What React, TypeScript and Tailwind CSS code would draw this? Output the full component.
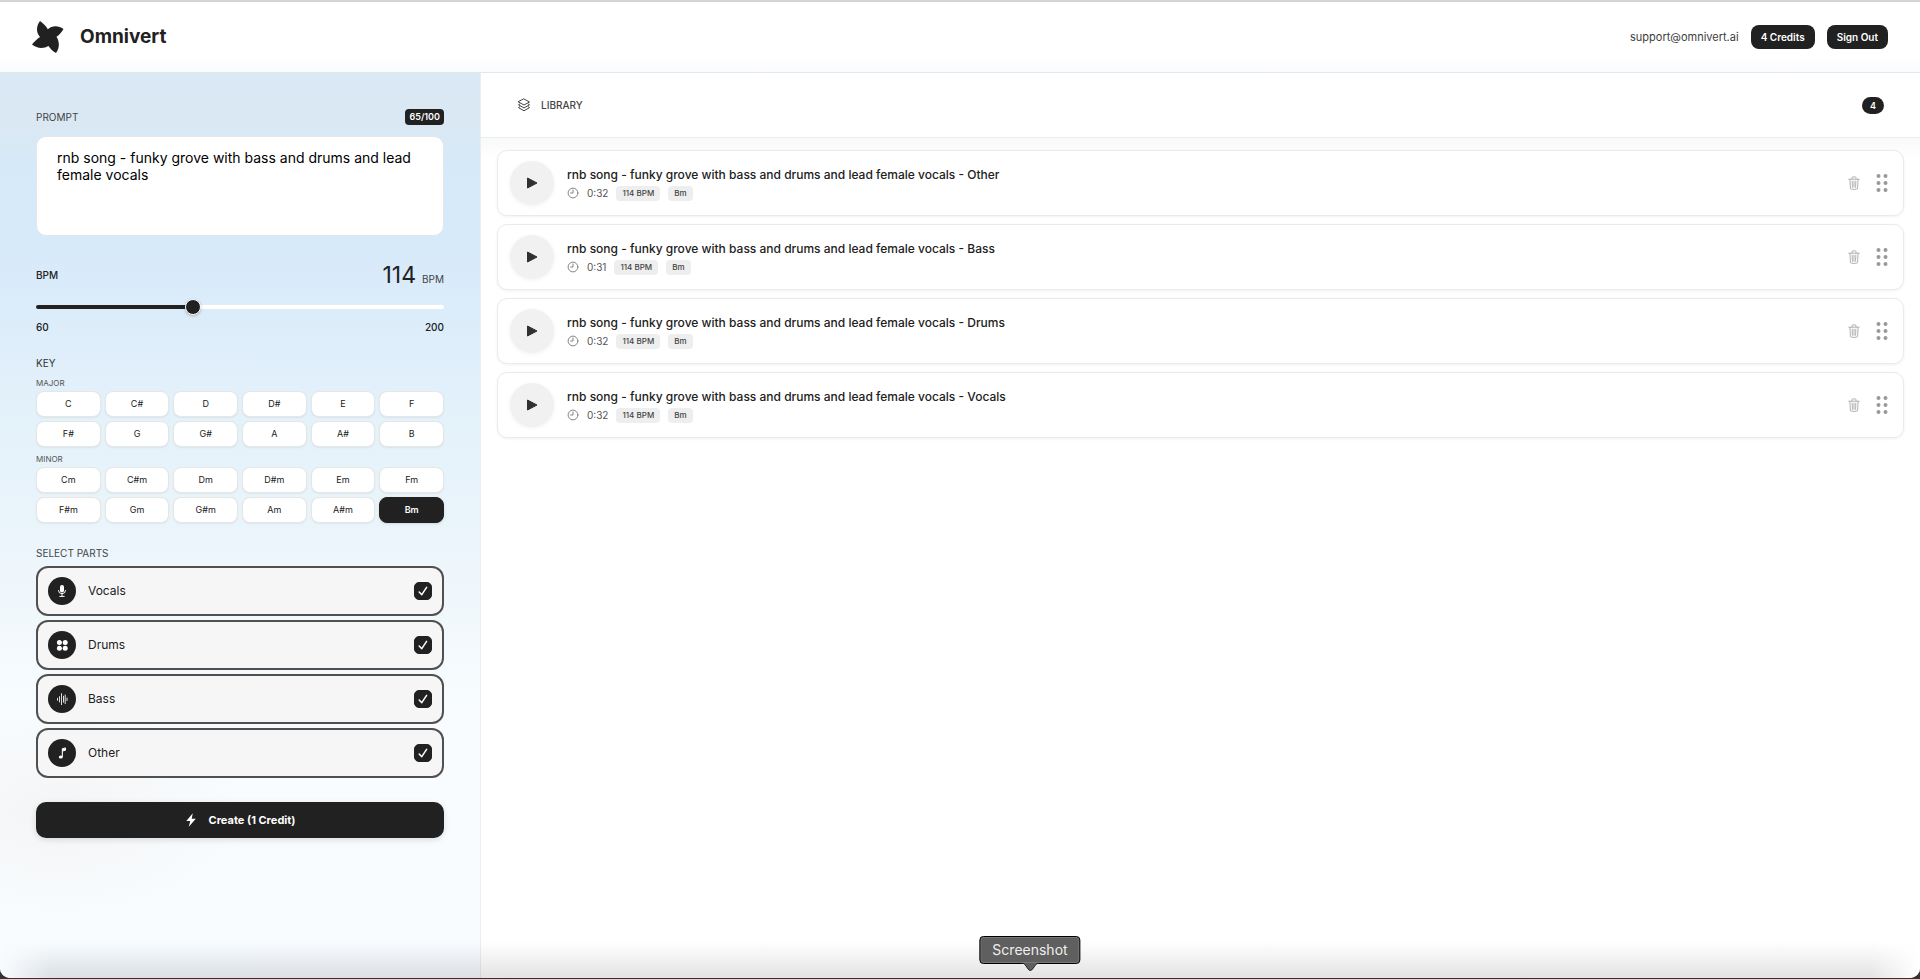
import { useState } from "react";
import type { ReactNode } from "react";

const majorKeys = ["C", "C#", "D", "D#", "E", "F", "F#", "G", "G#", "A", "A#", "B"];
const minorKeys = majorKeys.map((k) => k + "m");

const promptText = "rnb song - funky grove with bass and drums and lead female vocals";

const tracks = [
  { part: "Other", time: "0:32" },
  { part: "Bass", time: "0:31" },
  { part: "Drums", time: "0:32" },
  { part: "Vocals", time: "0:32" },
];

function Logo() {
  return (
    <svg viewBox="0 0 32 32" className="size-8 fill-[#212121]" aria-hidden="true">
      <path d="M8 0 C11 2 14 5 15.800 8.200 C20 4.500 26 4 31.500 8 C29 12 27 14 24.500 15.800 C27.500 20.500 28 27 24 32 C20.500 30 18 27.500 16.500 25 C12 27.500 5.500 28 0 23.500 C2.500 20.500 5 18 8 16 C4 12 4 5 8 0 Z" />
    </svg>
  );
}

function MicIcon() {
  return (
    <svg viewBox="0 0 14 14" className="size-3.5" aria-hidden="true">
      <rect x="5" y="1" width="4" height="7.500" rx="2" fill="white" />
      <path d="M3.500 6.500 a3.500 3.200 0 0 0 7 0 M7 10 V12.200 M4.800 12.400 H9.200" fill="none" stroke="white" strokeWidth="1" strokeLinecap="round" />
    </svg>
  );
}

function DrumsIcon() {
  return (
    <svg viewBox="0 0 14 14" className="size-3.5 fill-white" aria-hidden="true">
      <circle cx="4.400" cy="4.500" r="2.500" />
      <circle cx="10.200" cy="4.500" r="2.500" />
      <circle cx="4.400" cy="10.300" r="2.500" />
      <circle cx="10.200" cy="10.300" r="2.500" />
    </svg>
  );
}

function WaveIcon() {
  return (
    <svg viewBox="0 0 14 14" className="size-3.5" aria-hidden="true">
      <path d="M2.500 6.300 V8.300 M4.500 4.600 V10 M6.500 1.600 V12.600 M8.500 4.200 V10.200 M10.200 3 V11.600 M12 6 V8.600" fill="none" stroke="#dedede" strokeWidth="1" strokeLinecap="round" />
    </svg>
  );
}

function NoteIcon() {
  return (
    <svg viewBox="0 0 14 14" className="size-3.5" aria-hidden="true">
      <path d="M7.300 11 V2.700 L10.500 1.900 V4.200 L7.900 4.900" fill="white" stroke="white" strokeWidth="1" strokeLinejoin="round" />
      <ellipse cx="5.800" cy="11" rx="2" ry="1.600" fill="white" />
    </svg>
  );
}

function BoltIcon() {
  return (
    <svg viewBox="0 0 12 16" className="h-4 w-3 fill-white" aria-hidden="true">
      <path d="M7.800 1.300 L1.300 8.900 H5.200 L3.800 14.700 L10.800 6.700 H6.700 Z" />
    </svg>
  );
}

function LayersIcon() {
  return (
    <svg viewBox="0 0 14 14" className="size-3.5" fill="none" stroke="#444" strokeWidth="1" strokeLinejoin="round" strokeLinecap="round" aria-hidden="true">
      <path d="M7 1 L12.500 4 L7 7 L1.500 4 Z" />
      <path d="M2.800 6 L1.500 6.800 L7 9.900 L12.500 6.800 L11.200 6" />
      <path d="M2.800 8.800 L1.500 9.600 L7 12.800 L12.500 9.600 L11.200 8.800" />
    </svg>
  );
}

function ClockIcon() {
  return (
    <svg viewBox="0 0 12 12" className="size-3" fill="none" stroke="#777" strokeWidth="0.9" strokeLinecap="round" aria-hidden="true">
      <circle cx="6" cy="6" r="4.900" />
      <path d="M6 3 V6 H3.600" />
    </svg>
  );
}

function TrashIcon() {
  return (
    <svg viewBox="0 0 12 14" className="h-3.5 w-3" fill="none" stroke="#a8a8a8" strokeWidth="0.9" strokeLinecap="round" strokeLinejoin="round" aria-hidden="true">
      <path d="M0.800 3.200 H11.200 M4 3 V1.800 Q4 0.900 4.900 0.900 H7.100 Q8 0.900 8 1.800 V3 M1.900 3.400 L2.400 12 Q2.500 13.300 3.700 13.300 H8.300 Q9.500 13.300 9.600 12 L10.100 3.400 M4.200 5.200 L4.400 11.300 M6 5.200 V11.300 M7.800 5.200 L7.600 11.300" />
    </svg>
  );
}

function GripIcon() {
  return (
    <svg viewBox="0 0 12 18" className="h-[18px] w-3 fill-[#999]" aria-hidden="true">
      {[2, 9, 16].map((y) => (
        <g key={y}>
          <circle cx="2.500" cy={y} r="2" />
          <circle cx="9.500" cy={y} r="2" />
        </g>
      ))}
    </svg>
  );
}

function KeyGrid({ keys, selected, onSelect }: { keys: string[]; selected: string; onSelect: (k: string) => void }) {
  return (
    <div className="grid grid-cols-6 gap-1">
      {keys.map((k) => (
        <button
          key={k}
          type="button"
          aria-pressed={k === selected}
          onClick={() => onSelect(k)}
          className={
            k === selected
              ? "h-[26px] rounded-lg border border-[#212121] bg-[#212121] text-[9px] font-semibold text-white shadow-sm"
              : "h-[26px] rounded-lg border border-[#e6e6e6] bg-white text-[9px] text-[#212121] shadow-[0_1px_2px_rgba(0,0,0,0.06)]"
          }
        >
          {k}
        </button>
      ))}
    </div>
  );
}

function PartRow({ name, icon }: { name: string; icon: ReactNode }) {
  return (
    <label className="flex h-[50px] items-center rounded-xl border-2 border-[#505050] bg-[#f6f6f6] px-2.5">
      <span className="grid size-7 place-items-center rounded-full bg-[#212121]">{icon}</span>
      <span className="ml-3 flex-1 text-xs text-[#212121]">{name}</span>
      <span className="grid size-[18px] place-items-center">
        <input type="checkbox" defaultChecked className="peer col-start-1 row-start-1 size-[18px] appearance-none rounded-[5px] border border-[#212121] bg-white checked:bg-[#212121]" />
        <svg viewBox="0 0 12 12" className="pointer-events-none col-start-1 row-start-1 size-3 opacity-0 peer-checked:opacity-100" aria-hidden="true">
          <path d="M2.200 7 L4.800 9.700 L9.600 2.300" fill="none" stroke="white" strokeWidth="1.500" strokeLinecap="round" strokeLinejoin="round" />
        </svg>
      </span>
    </label>
  );
}

export default function App() {
  const [bpm, setBpm] = useState(114);
  const [musicKey, setMusicKey] = useState("Bm");
  const [prompt, setPrompt] = useState(promptText);

  return (
    <div className="flex min-h-screen flex-col bg-[#333] pb-px font-['Inter',sans-serif] text-[#212121]">
      <div className="relative flex flex-1 flex-col overflow-hidden rounded-b-[10px] bg-white">
        <header className="flex h-[73px] items-center border-t-2 border-b border-t-[#d4d4d4] border-b-[#e4e6e8] bg-linear-to-b from-white from-80% to-[#fafbfd] px-8">
          <Logo />
          <h1 className="ml-4 text-[19px] font-bold">Omnivert</h1>
          <div className="ml-auto flex items-center gap-3">
            <span className="text-[11px] text-[#3d3d3d]">support@omnivert.ai</span>
            <button type="button" className="h-6 rounded-lg bg-[#212121] px-2.5 text-[10px] font-semibold text-white">4 Credits</button>
            <button type="button" className="h-6 rounded-lg bg-[#212121] px-2.5 text-[10px] font-semibold text-white">Sign Out</button>
          </div>
        </header>

        <div className="flex flex-1">
          <aside className="w-1/4 min-w-80 bg-[radial-gradient(ellipse_190px_110px_at_60px_740px,rgba(244,244,244,0.9),rgba(246,246,246,0)),linear-gradient(to_bottom,#d9e8f4_0,#dae8f3_50px,#d5e9f9_100px,#d7eafa_170px,#ddedfa_260px,#e4f2fa_350px,#eaf4fb_450px,#f1f8fc_540px,#f8fcff_640px,#f8fcff_100%)] px-9 pt-9">
            <div className="flex h-4 items-center justify-between">
              <label htmlFor="prompt" className="text-[10px] leading-4 text-[#444]">PROMPT</label>
              <span className="rounded-sm bg-[#212121] px-1 text-[9px] leading-4 font-semibold text-white">{prompt.length}/100</span>
            </div>
            <textarea
              id="prompt"
              value={prompt}
              maxLength={100}
              onChange={(e) => setPrompt(e.target.value)}
              className="mt-[11px] block h-[100px] w-full resize-none rounded-[10px] border border-[#e6e6e6] bg-white px-5 py-3 text-sm leading-[17px] text-black outline-none"
            />

            <div className="mt-6 flex h-[30px] items-center justify-between">
              <label htmlFor="bpm" className="text-[10px] font-medium">BPM</label>
              <div className="flex items-baseline gap-1.5">
                <span className="text-[23px]">{bpm}</span>
                <span className="text-[10px] text-[#444]">BPM</span>
              </div>
            </div>
            <div className="mt-[9px] grid h-4 items-center">
              <div className="col-start-1 row-start-1 h-1 overflow-hidden rounded-full bg-white">
                <div className="h-full bg-[#212121]" style={{ width: ((bpm - 60) / 140) * 100 + "%" }} />
              </div>
              <input
                id="bpm"
                type="range"
                min={60}
                max={200}
                value={bpm}
                onChange={(e) => setBpm(Number(e.target.value))}
                className="col-start-1 row-start-1 -mx-2 h-4 appearance-none bg-transparent [&::-webkit-slider-thumb]:size-4 [&::-webkit-slider-thumb]:appearance-none [&::-webkit-slider-thumb]:rounded-full [&::-webkit-slider-thumb]:border [&::-webkit-slider-thumb]:border-white [&::-webkit-slider-thumb]:bg-[#212121] [&::-webkit-slider-thumb]:shadow-[0_1px_3px_rgba(0,0,0,0.25)]"
              />
            </div>
            <div className="mt-1 flex justify-between text-[10px] leading-4 font-medium">
              <span>60</span>
              <span>200</span>
            </div>

            <h2 className="mt-5 text-[10px] leading-4 text-[#333]">KEY</h2>
            <h3 className="mt-1 text-[8px] leading-4 text-[#555]">MAJOR</h3>
            <KeyGrid keys={majorKeys} selected={musicKey} onSelect={setMusicKey} />
            <h3 className="mt-1 text-[8px] leading-4 text-[#555]">MINOR</h3>
            <KeyGrid keys={minorKeys} selected={musicKey} onSelect={setMusicKey} />

            <h2 className="mt-[22px] text-[10px] leading-4 text-[#444]">SELECT PARTS</h2>
            <div className="mt-[5px] flex flex-col gap-1">
              <PartRow name="Vocals" icon={<MicIcon />} />
              <PartRow name="Drums" icon={<DrumsIcon />} />
              <PartRow name="Bass" icon={<WaveIcon />} />
              <PartRow name="Other" icon={<NoteIcon />} />
            </div>
            <button type="button" className="mt-6 flex h-9 w-full items-center justify-center gap-3 rounded-[10px] bg-[#212121] text-[11px] font-bold text-white shadow-[0_2px_6px_rgba(0,0,0,0.12)]">
              <BoltIcon />
              Create (1 Credit)
            </button>
          </aside>

          <main className="min-w-0 flex-1 border-l border-[#ebedef] bg-white">
            <div className="flex h-[65px] items-center border-b border-[#ececec] bg-white px-9">
              <LayersIcon />
              <h2 className="ml-2.5 text-[10px] font-medium text-[#444]">LIBRARY</h2>
              <span className="ml-auto rounded-full bg-[#212121] px-2 text-[9px] leading-[17px] font-semibold text-white">4</span>
            </div>
            <ul className="flex flex-col gap-2 bg-linear-to-b from-[#f8f9fa] to-white to-[20px] px-4 pt-3 pb-4">
              {tracks.map((t) => (
                <li key={t.part} className="flex h-[66px] items-center rounded-[10px] border border-[#ebebeb] bg-white pr-[15px] pl-3 shadow-[0_1px_3px_rgba(0,0,0,0.06)]">
                  <button type="button" aria-label={"Play " + t.part} className="grid size-[44px] place-items-center rounded-full bg-[#f1f1f1] shadow-[0_1px_4px_rgba(0,0,0,0.06)]">
                    <svg viewBox="0 0 12 12" className="size-3 fill-[#303030] stroke-[#303030]" strokeLinejoin="round" aria-hidden="true">
                      <path d="M1.500 1 L11 6 L1.500 11 Z" />
                    </svg>
                  </button>
                  <div className="ml-[13px] min-w-0 flex-1">
                    <p className="truncate text-xs leading-5 font-medium">{promptText} - {t.part}</p>
                    <div className="flex items-center gap-2">
                      <ClockIcon />
                      <span className="text-[10px] leading-4 text-[#555]">{t.time}</span>
                      <span className="rounded-sm bg-[#eee] px-1.5 text-[8px] leading-[15px] font-medium text-[#444]">114 BPM</span>
                      <span className="rounded-sm bg-[#eee] px-1.5 text-[8px] leading-[15px] font-medium text-[#444]">Bm</span>
                    </div>
                  </div>
                  <div className="flex items-center gap-4">
                    <button type="button" aria-label={"Delete " + t.part}>
                      <TrashIcon />
                    </button>
                    <button type="button" aria-label={"Move " + t.part}>
                      <GripIcon />
                    </button>
                  </div>
                </li>
              ))}
            </ul>
          </main>
        </div>

        <div className="pointer-events-none absolute inset-x-0 bottom-0 h-9 bg-linear-to-t from-[rgba(60,64,72,0.15)] to-transparent mask-x-from-[calc(100%-50px)]" />
        <div className="absolute bottom-[5px] left-[calc(50%+70px)] flex -translate-x-1/2 flex-col items-center">
          <div className="rounded-sm border border-black bg-[#5f5f5f] px-3 text-sm leading-[26px] text-[#eee] ring-1 ring-[#777] ring-inset" role="tooltip">
            Screenshot
          </div>
          <svg viewBox="0 0 18 10" className="-mt-px h-2.5 w-[18px]" aria-hidden="true">
            <path d="M0 0 C3 0 4 2 6 5 Q9 10 12 5 C14 2 15 0 18 0" fill="#5f5f5f" stroke="#222" strokeWidth="1" />
          </svg>
        </div>
      </div>
    </div>
  );
}
